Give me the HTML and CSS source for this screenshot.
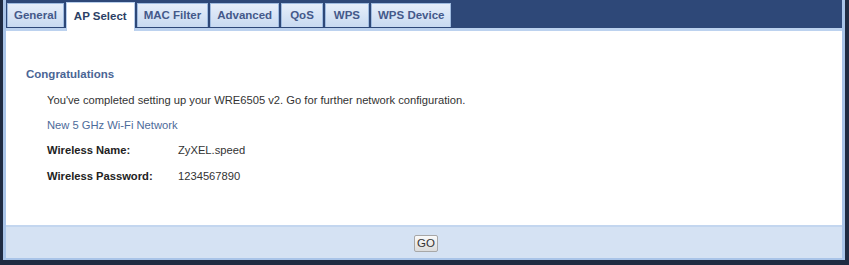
FILE: index.html
```html
<!DOCTYPE html>
<html lang="en">
<head>
    <meta charset="UTF-8">
    <title>AP Select</title>
    <link rel="stylesheet" href="styles.css">
</head>
<body>
    <div class="panel">
        <ul class="tabs">
            <li><a href="#">General</a></li>
            <li class="active"><a href="#">AP Select</a></li>
            <li><a href="#">MAC Filter</a></li>
            <li><a href="#">Advanced</a></li>
            <li class="wide"><a href="#">QoS</a></li>
            <li class="wide"><a href="#">WPS</a></li>
            <li><a href="#">WPS Device</a></li>
        </ul>

        <div class="content">
            <h3>Congratulations</h3>
            <p class="intro">You've completed setting up your WRE6505 v2. Go for further network configuration.</p>
            <p class="network">New 5 GHz Wi-Fi Network</p>
            <div class="row">
                <span class="label">Wireless Name:</span>
                <span>ZyXEL.speed</span>
            </div>
            <div class="row">
                <span class="label">Wireless Password:</span>
                <span>1234567890</span>
            </div>
        </div>

        <div class="footer">
            <button class="go-button">GO</button>
        </div>
    </div>
</body>
</html>
```

FILE: styles.css
```css
/* General */
* {
    margin: 0;
    padding: 0;
    box-sizing: border-box;
}

body {
    background-color: #1f2b42;
    font-family: 'Liberation Sans', Arial, sans-serif;
    font-size: 11.2px;
    line-height: 14px;
    color: #333;
    height: 265px;
    overflow: hidden;
}

.panel {
    margin: 0 4px 0 3px;
    height: 260px;
    background-color: #2e4878;
    border-left: 3px solid #a9c4e8;
    border-right: 3px solid #a9c4e8;
    border-bottom: 2px solid #a9c4e8;
    display: flex;
    flex-direction: column;
}

/* Tabs */
.tabs {
    list-style: none;
    display: flex;
    gap: 2px;
    padding: 3px 0 0 1px;
    height: 28px;
}

.tabs li a {
    display: block;
    height: 24px;
    line-height: 22px;
    padding: 0 6px;
    text-decoration: none;
    font-weight: bold;
    font-size: 11.5px;
    color: #44598a;
    background: linear-gradient(#e6eefa, #c8daf1);
    border: 1px solid #9fbbe0;
    border-bottom: none;
}

.tabs li.wide a {
    padding: 0 8px;
}

.tabs li.active {
    position: relative;
    z-index: 1;
}

.tabs li.active a {
    height: 29px;
    margin-top: -1px;
    line-height: 27px;
    padding: 0 7px;
    background: #fff;
    color: #2c3f66;
    border-color: #b9cfec;
}

/* Content */
.content {
    flex: 1;
    background-color: #fff;
    border-top: 3px solid #bcd2ef;
    padding: 36px 0 0 20px;
}

.content h3 {
    font-size: 11.5px;
    color: #4a6595;
    margin-bottom: 12px;
}

.intro {
    padding-left: 21px;
    margin-bottom: 11px;
}

.network {
    padding-left: 21px;
    color: #4d6b9a;
    margin-bottom: 11px;
}

.row {
    display: flex;
    padding-left: 21px;
    margin-bottom: 11.5px;
}

.row .label {
    width: 131px;
    font-weight: bold;
    color: #222;
}

/* Footer */
.footer {
    height: 33px;
    background-color: #d5e2f3;
    border-top: 2px solid #c3d6ef;
    display: flex;
    justify-content: center;
    align-items: center;
    padding: 2px 0 0 4px;
}

.go-button {
    font-family: 'Liberation Sans', Arial, sans-serif;
    font-size: 11.5px;
    line-height: 13px;
    color: #333;
    padding: 1px 2px;
    background: linear-gradient(#fafafa, #dcdcdc);
    border: 1px solid #a7a7a7;
    border-radius: 2px;
}
```
